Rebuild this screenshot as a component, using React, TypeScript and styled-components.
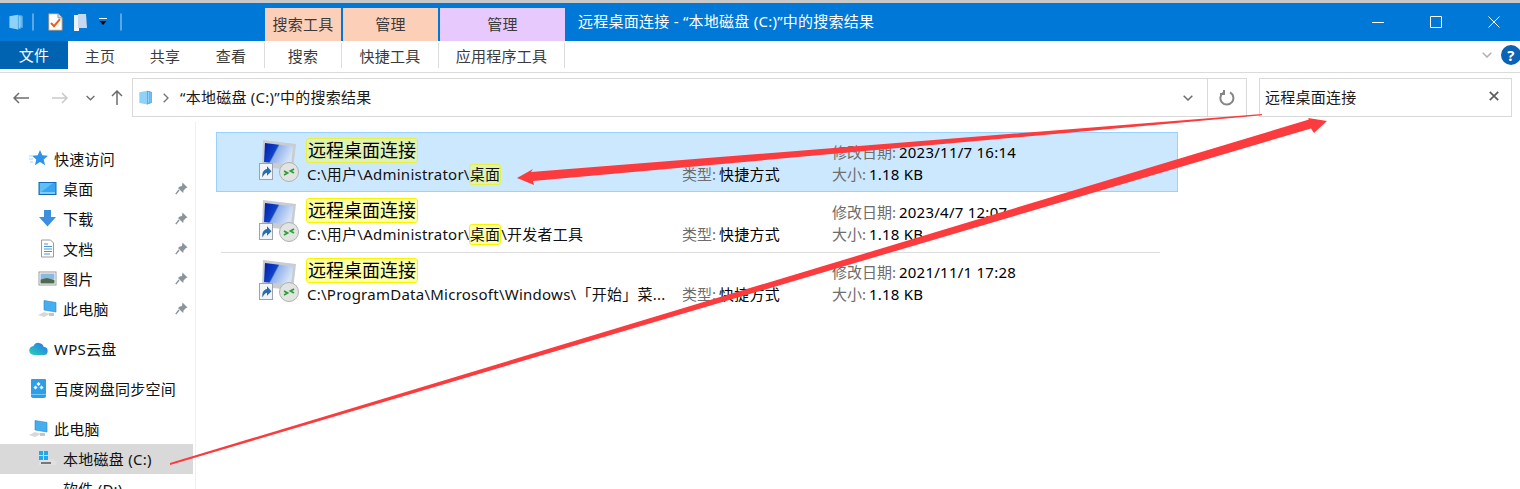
import styled, { createGlobalStyle } from "styled-components";
import type { ReactNode } from "react";

const GlobalStyle = createGlobalStyle`
  html, body {
    margin: 0;
    padding: 0;
    background: #fff;
  }
  * {
    box-sizing: border-box;
  }
`;

const Window = styled.div`
  position: relative;
  width: 1520px;
  height: 489px;
  overflow: hidden;
  background: #fff;
  color: #000;
  font-family: "Noto Sans", "Noto Sans CJK SC", sans-serif;
  font-size: 15px;
  letter-spacing: 0.25px;
`;

const TopStrip = styled.div`
  height: 3px;
  background: #c9c9c9;
`;

const TitleBar = styled.div`
  height: 38px;
  display: flex;
  background: #0078d7;
`;

const QuickAccess = styled.div`
  width: 265px;
  display: flex;
  align-items: center;
  padding: 0 0 0 8px;
`;

const QuickSep = styled.div<{ $left: number; $right: number }>`
  width: 2px;
  height: 18px;
  margin: 0 ${(p) => p.$right}px 0 ${(p) => p.$left}px;
  background: #0078d7;
  border: 1px solid #5ea6e3;
  border-radius: 1px;
`;

const QuickGap = styled.div<{ $width: number }>`
  width: ${(p) => p.$width}px;
`;

const ContextTabs = styled.div`
  display: flex;
  gap: 2px;
  padding-top: 5px;
`;

const ContextTab = styled.div<{ $width: number; $bg: string }>`
  width: ${(p) => p.$width}px;
  background: ${(p) => p.$bg};
  color: #3b3b3b;
  display: flex;
  align-items: center;
  justify-content: center;
  padding-bottom: 2px;
`;

const TitleText = styled.div`
  margin-left: 13px;
  color: #fff;
  line-height: 36px;
  white-space: nowrap;
`;

const WindowControls = styled.div`
  margin-left: auto;
  display: flex;
  align-items: center;
  gap: 46px;
  padding-right: 20px;
`;

const Ribbon = styled.div`
  height: 32px;
  display: flex;
  border-bottom: 1px solid #dadbdc;
  background: #fff;
`;

const FileTab = styled.div`
  width: 68px;
  height: 28px;
  background: #0063b1;
  color: #fff;
  display: flex;
  align-items: center;
  justify-content: center;
  padding-bottom: 2px;
`;

const RibbonTab = styled.div<{ $width: number; $sep?: boolean }>`
  width: ${(p) => p.$width}px;
  height: 25px;
  display: flex;
  align-items: center;
  justify-content: center;
  color: #3b3b3b;
  margin-top: 2px;
  border-right: ${(p) => (p.$sep ? "1px solid #dcdcdc" : "none")};
`;

const RibbonEnd = styled.div`
  margin-left: auto;
  display: flex;
  align-items: center;
  gap: 8px;
  padding: 0 0 3px 0;
`;

const HelpBadge = styled.div`
  width: 20px;
  height: 20px;
  border-radius: 50%;
  margin-right: -1px;
  background: #0a63b4;
  color: #fff;
  display: flex;
  align-items: center;
  justify-content: center;
  font-weight: 700;
  font-size: 15px;
`;

const NavBar = styled.div`
  height: 49px;
  display: flex;
  align-items: flex-start;
  padding-top: 5px;
`;

const NavButtons = styled.div`
  width: 132px;
  height: 39px;
  display: flex;
  align-items: center;
  padding-left: 13px;
`;

const NavSlot = styled.div<{ $width: number }>`
  width: ${(p) => p.$width}px;
  display: flex;
  align-items: center;
`;

const AddressBox = styled.div`
  width: 1115px;
  height: 39px;
  border: 1px solid #d9d9d9;
  display: flex;
  align-items: center;
  padding-left: 5px;
`;

const Crumb = styled.svg`
  margin-left: 10px;
`;

const AddressText = styled.div`
  margin-left: 11px;
  padding-bottom: 3px;
  color: #1a1a1a;
  white-space: nowrap;
`;

const AddressEnd = styled.div`
  margin-left: auto;
  display: flex;
  height: 100%;
  align-items: center;
`;

const AddressBtn = styled.div<{ $divider?: boolean }>`
  width: ${(p) => (p.$divider ? 39 : 38)}px;
  height: 100%;
  display: flex;
  align-items: center;
  justify-content: center;
  border-left: ${(p) => (p.$divider ? "1px solid #d9d9d9" : "none")};
`;

const SearchBox = styled.div`
  width: 253px;
  height: 39px;
  margin-left: 12px;
  border: 1px solid #d9d9d9;
  display: flex;
  align-items: center;
  justify-content: space-between;
  padding: 0 12px 3px 5px;
  color: #1a1a1a;
`;

const Body = styled.div`
  display: flex;
  height: 367px;
`;

const Sidebar = styled.div`
  width: 196px;
  flex-shrink: 0;
  padding-top: 22px;
  border-right: 1px solid #f0f0f0;
`;

const SideRow = styled.div<{ $level: number; $selected?: boolean; $gap?: number }>`
  height: 30px;
  width: 193px;
  display: flex;
  align-items: center;
  gap: 6px;
  padding-left: ${(p) => (p.$level === 1 ? 29 : 38)}px;
  padding-right: 3px;
  padding-bottom: 2px;
  margin-top: ${(p) => p.$gap ?? 0}px;
  background: ${(p) => (p.$selected ? "#d9d9d9" : "transparent")};
  color: #111;
  white-space: nowrap;
`;

const SideIcon = styled.div`
  width: 19px;
  height: 19px;
  flex-shrink: 0;
`;

const PinSlot = styled.div`
  margin-left: auto;
  margin-right: 2px;
  display: flex;
`;

const Results = styled.div`
  padding: 10px 0 0 20px;
`;

const ResultRow = styled.div<{ $selected?: boolean }>`
  width: 962px;
  height: 60px;
  display: grid;
  grid-template-columns: 91px 375px 150px 1fr;
  grid-template-rows: 22px 21px;
  padding-top: 10px;
  background: ${(p) => (p.$selected ? "#cce8ff" : "transparent")};
  outline: ${(p) => (p.$selected ? "1px solid #99d1ff" : "none")};
  outline-offset: -1px;
`;

const RowRule = styled.div`
  width: 939px;
  height: 1px;
  margin: 0 0 -1px 5px;
  background: #dcdcdc;
`;

const ThumbCell = styled.div`
  grid-row: 1 / span 2;
  padding: 0 0 0 39px;
  margin-top: -7px;
`;

const NameCell = styled.div`
  display: flex;
  align-items: flex-start;
  font-size: 18px;
  letter-spacing: 0;
  margin-top: -4px;
`;

const Mark = styled.span<{ $selected?: boolean; $small?: boolean }>`
  display: inline-block;
  background: ${(p) => (p.$selected ? "#dff2b4" : "#ffffa8")};
  border: 1px solid ${(p) => (p.$selected ? "#e8f040" : "#f6f600")};
  border-radius: 3px;
  padding: 0 ${(p) => (p.$small ? 0 : 1)}px;
  margin-left: -1px;
  line-height: ${(p) => (p.$small ? "19px" : "23px")};
`;

const PathCell = styled.div`
  grid-column: 2;
  grid-row: 2;
  color: #111;
  white-space: nowrap;
  line-height: 21px;
`;

const MetaCell = styled.div<{ $column: number; $row: number }>`
  grid-column: ${(p) => p.$column};
  grid-row: ${(p) => p.$row};
  white-space: nowrap;
  line-height: 21px;
`;

const MetaLabel = styled.span`
  color: #6d6d6d;
  letter-spacing: 0;
  margin-right: -1px;
`;

const ArrowLayer = styled.svg`
  position: absolute;
  left: 0;
  top: 0;
  pointer-events: none;
`;

const CubeIcon = ({ size = 16 }: { size?: number }) => (
  <svg width={size} height={size} viewBox="0 0 16 17">
    <path d="M1 2.500 10 .8l5 1.400v12.200l-5 2-9-1.800z" fill="#8fd2f8" />
    <path d="M10 .8l5 1.400v12.200l-5 2z" fill="#3fa2e8" />
    <path d="M11.500 2v13M13.200 2.500v11.500" stroke="#a5dcfa" />
  </svg>
);

const CheckDoc = () => (
  <svg width="15" height="18" viewBox="0 0 15 18">
    <path d="M.7.7h9.500l4 4v12.600H.7z" fill="#fff" stroke="#8a8a8a" />
    <path d="M10 .7v4.200h4.200" fill="#ddd" stroke="#9a9a9a" />
    <path d="M3 10l3 3.200 6-7" fill="none" stroke="#e8601c" strokeWidth="2" />
  </svg>
);

const PaleFolder = () => (
  <svg width="13" height="17" viewBox="0 0 13 17">
    <path d="M0 1h4l1 3v13H0z" fill="#e9f1fb" />
    <path d="M4 0h8l1 14H4z" fill="#c5d8f0" />
    <path d="M0 14h5v3H1z" fill="#f4f8fd" />
  </svg>
);

const DropMark = () => (
  <svg width="8" height="8" viewBox="0 0 8 8">
    <path d="M0 0h8v1H0z" fill="#fff" />
    <path d="M.5 3h7L4 7z" fill="#000" />
  </svg>
);

const MinIcon = () => (
  <svg width="12" height="12" viewBox="0 0 12 12">
    <path d="M0 6.500h12" stroke="#fff" />
  </svg>
);

const MaxIcon = () => (
  <svg width="12" height="12" viewBox="0 0 12 12">
    <path d="M.5.5h11v11H.5z" fill="none" stroke="#fff" />
  </svg>
);

const CloseIcon = () => (
  <svg width="12" height="12" viewBox="0 0 12 12">
    <path d="M.5.5l11 11M11.500.5l-11 11" stroke="#fff" />
  </svg>
);

const Chevron = ({ color = "#6d6d6d", w = 10 }: { color?: string; w?: number }) => (
  <svg width={w} height="6" viewBox="0 0 10 6">
    <path d="M.7.7 5 5l4.300-4.300" fill="none" stroke={color} strokeWidth="1.500" />
  </svg>
);

const NavArrow = ({ color, flip }: { color: string; flip?: boolean }) => (
  <svg width="16" height="12" viewBox="0 0 16 12" style={flip ? { transform: "scaleX(-1)" } : undefined}>
    <path d="M1 6h15M6 1 1 6l5 5" fill="none" stroke={color} strokeWidth="1.500" />
  </svg>
);

const UpArrow = () => (
  <svg width="12" height="15" viewBox="0 0 12 15">
    <path d="M6 15V1M1 6l5-5 5 5" fill="none" stroke="#6d6d6d" strokeWidth="1.500" />
  </svg>
);

const RefreshIcon = () => (
  <svg width="16" height="16" viewBox="0 0 16 16">
    <path d="M11 2.400a6.500 6.500 0 1 1-6.400.1" fill="none" stroke="#858585" strokeWidth="2" />
    <path d="M5 0v4H1" fill="none" stroke="#858585" strokeWidth="2" />
  </svg>
);

const ClearIcon = () => (
  <svg width="10" height="10" viewBox="0 0 10 10">
    <path d="M.8.8l8.400 8.400M9.200.8.8 9.200" stroke="#5c5c5c" strokeWidth="1.700" />
  </svg>
);

const PinIcon = () => (
  <svg width="13" height="13" viewBox="0 0 13 13">
    <path d="M7.500.5 12.500 5.500 11 6l-2.500 2.500-.2 2.500-2-1.800L5 8 3 6 4.800 4.500 7 4z" fill="#8b939b" />
    <path d="M4 8 .8 12.200" stroke="#8b939b" strokeWidth="1.400" />
  </svg>
);

const StarIcon = () => (
  <svg width="19" height="19" viewBox="0 0 19 19">
    <path d="M11 1l2.300 5.300 5.700.4-4.300 3.700 1.400 5.800L11 13.100l-5.100 3.100 1.400-5.800L3 6.700l5.700-.4z" fill="#2f93e8" />
    <path d="M0 7h3M0 10h4M1 13h3" stroke="#a8d2f4" />
  </svg>
);

const DesktopIcon = () => (
  <svg width="19" height="19" viewBox="0 0 19 19">
    <rect x="1" y="3.500" width="17" height="12" fill="#37a5f0" stroke="#0f6cb8" />
    <path d="M2 14 15 4H2z" fill="#5fc0f6" />
    <path d="M2 14h15" stroke="#d4ecfb" />
  </svg>
);

const DownloadIcon = () => (
  <svg width="19" height="19" viewBox="0 0 19 19">
    <path d="M6 1h7v7h5l-8.500 9.500L1 8h5z" fill="#3c8fe0" />
  </svg>
);

const DocIcon = () => (
  <svg width="19" height="19" viewBox="0 0 19 19">
    <path d="M3.500 1h9l3 3v14h-12z" fill="#fff" stroke="#9b9b9b" />
    <path d="M6 5h4M6 7.500h8M6 10h8M6 12.500h8M6 15h6" stroke="#4a92cc" />
  </svg>
);

const PictureIcon = () => (
  <svg width="19" height="19" viewBox="0 0 19 19">
    <rect x="1" y="3" width="17" height="13" fill="#fff" stroke="#9b9b9b" />
    <rect x="2.500" y="4.500" width="14" height="6" fill="#8cb9e0" />
    <path d="M2.500 10.500 9 9l7.500 2v3.500h-14z" fill="#4f6b4d" />
  </svg>
);

const PcIcon = () => (
  <svg width="20" height="19" viewBox="0 0 20 19">
    <path d="M6 1.500 18 3.500v9.500L6 11z" fill="#45aef0" stroke="#2b86c9" strokeWidth=".6" />
    <path d="M0 16 6 13l6 2-6 3z" fill="#d8d8d8" />
    <path d="M11 14h5v3h-5z" fill="#c5c5c5" />
  </svg>
);

const WpsCloud = () => (
  <svg width="19" height="19" viewBox="0 0 19 19">
    <defs>
      <linearGradient id="wpsGrad" x1="0" x2="1" y1="1" y2="0">
        <stop offset="0" stopColor="#27d3b4" />
        <stop offset="1" stopColor="#2a6ff0" />
      </linearGradient>
    </defs>
    <path d="M5 16a4.500 4.500 0 0 1-.5-9 5.500 5.500 0 0 1 10.300 1A4 4 0 0 1 14.500 16z" fill="url(#wpsGrad)" />
  </svg>
);

const BaiduIcon = () => (
  <svg width="19" height="19" viewBox="0 0 19 19">
    <path d="M3 0h13a1 1 0 0 1 1 1v16a2 2 0 0 1-2 2H4a2 2 0 0 1-2-2V1a1 1 0 0 1 1-1z" fill="#2b9fe8" />
    <path d="M9.500 3 11.500 5 9.500 7 7.500 5zM6.500 6.500 8.500 8.500 6.500 10.500 4.500 8.500zM12.500 6.500 14.500 8.500 12.500 10.500 10.500 8.500z" fill="#fff" />
    <path d="M2 15.500h15" stroke="#7cc7f4" />
  </svg>
);

const DriveIcon = ({ system }: { system?: boolean }) => (
  <svg width="19" height="19" viewBox="0 0 19 19">
    <path d="M1 12.500 4 10h11l3.500 2.500V16H1z" fill="#e0e0e0" />
    <path d="M3 14h10" stroke="#555" strokeWidth="1.500" />
    {system && <path d="M1 2h4v4H1zM6 2h4v4H6zM1 7h4v4H1zM6 7h4v4H6z" fill="#1fa8ee" />}
  </svg>
);

const RdpIcon = () => (
  <svg width="50" height="50" viewBox="0 0 50 50">
    <defs>
      <linearGradient id="rdpScreen" x1="0" x2="1" y1="0" y2="0.400">
        <stop offset="0" stopColor="#001ca8" />
        <stop offset="0.450" stopColor="#1244c8" />
        <stop offset="0.500" stopColor="#8fb0ea" />
        <stop offset="1" stopColor="#d5e3f8" />
      </linearGradient>
    </defs>
    <path d="M8 5 41 9l-3 26-31-3z" fill="#c9ccd0" />
    <path d="M10 8 38 11.500 36 30 9 27z" fill="url(#rdpScreen)" />
    <rect x="4.500" y="28.500" width="13" height="16" fill="#f2f5f8" stroke="#9da3a8" />
    <path d="M7.500 42.500c-.8-4.500 1-8 4.500-8.500v-2.800l4.500 5-4.500 4.500v-3c-2 .3-3.300 2.200-4.500 4.800z" fill="#2d6cab" />
    <circle cx="34" cy="37" r="9.500" fill="#e2e4e2" stroke="#aeb2ae" />
    <path d="M29 36l3.500 2-3.500 2M39 34l-3.500 2 3.500 2" fill="none" stroke="#2f9f3a" strokeWidth="1.800" />
  </svg>
);

const sideRows: { label: string; icon: ReactNode; level: number; pin?: boolean; gap?: number; selected?: boolean }[] = [
  { label: "快速访问", icon: <StarIcon />, level: 1 },
  { label: "桌面", icon: <DesktopIcon />, level: 2, pin: true },
  { label: "下载", icon: <DownloadIcon />, level: 2, pin: true },
  { label: "文档", icon: <DocIcon />, level: 2, pin: true },
  { label: "图片", icon: <PictureIcon />, level: 2, pin: true },
  { label: "此电脑", icon: <PcIcon />, level: 2, pin: true },
  { label: "WPS云盘", icon: <WpsCloud />, level: 1, gap: 10 },
  { label: "百度网盘同步空间", icon: <BaiduIcon />, level: 1, gap: 10 },
  { label: "此电脑", icon: <PcIcon />, level: 1, gap: 10 },
  { label: "本地磁盘 (C:)", icon: <DriveIcon system />, level: 2, selected: true },
  { label: "软件 (D:)", icon: <DriveIcon />, level: 2 },
];

const results = [
  {
    path: (s: boolean) => (
      <>
        C:\用户\Administrator\<Mark $small $selected={s}>桌面</Mark>
      </>
    ),
    date: "2023/11/7 16:14",
    selected: true,
  },
  {
    path: (s: boolean) => (
      <>
        C:\用户\Administrator\<Mark $small $selected={s}>桌面</Mark>\开发者工具
      </>
    ),
    date: "2023/4/7 12:07",
    selected: false,
  },
  {
    path: () => <>C:\ProgramData\Microsoft\Windows\「开始」菜...</>,
    date: "2021/11/1 17:28",
    selected: false,
  },
];

const App = () => {
  return (
    <Window>
      <GlobalStyle />
      <TopStrip />
      <TitleBar>
        <QuickAccess>
          <CubeIcon />
          <QuickSep $left={8} $right={14} />
          <CheckDoc />
          <QuickGap $width={11} />
          <PaleFolder />
          <QuickGap $width={12} />
          <DropMark />
          <QuickSep $left={13} $right={0} />
        </QuickAccess>
        <ContextTabs>
          <ContextTab $width={76} $bg="#fccfb9">搜索工具</ContextTab>
          <ContextTab $width={95} $bg="#fccfb9">管理</ContextTab>
          <ContextTab $width={125} $bg="#e8c9fd">管理</ContextTab>
        </ContextTabs>
        <TitleText>远程桌面连接 - “本地磁盘 (C:)”中的搜索结果</TitleText>
        <WindowControls>
          <MinIcon />
          <MaxIcon />
          <CloseIcon />
        </WindowControls>
      </TitleBar>
      <Ribbon>
        <FileTab>文件</FileTab>
        <RibbonTab $width={64}>主页</RibbonTab>
        <RibbonTab $width={66}>共享</RibbonTab>
        <RibbonTab $width={67} $sep>查看</RibbonTab>
        <RibbonTab $width={77} $sep>搜索</RibbonTab>
        <RibbonTab $width={97} $sep>快捷工具</RibbonTab>
        <RibbonTab $width={126} $sep>应用程序工具</RibbonTab>
        <RibbonEnd>
          <Chevron color="#b0b0b0" w={12} />
          <HelpBadge>?</HelpBadge>
        </RibbonEnd>
      </Ribbon>
      <NavBar>
        <NavButtons>
          <NavSlot $width={39}><NavArrow color="#6d6d6d" /></NavSlot>
          <NavSlot $width={34}><NavArrow color="#c9c9c9" flip /></NavSlot>
          <NavSlot $width={25}><Chevron w={9} /></NavSlot>
          <NavSlot $width={12}><UpArrow /></NavSlot>
        </NavButtons>
        <AddressBox>
          <CubeIcon size={15} />
          <Crumb width="6" height="10" viewBox="0 0 6 10">
            <path d="M.7.7 5 5 .7 9.300" fill="none" stroke="#707070" strokeWidth="1.300" />
          </Crumb>
          <AddressText>“本地磁盘 (C:)”中的搜索结果</AddressText>
          <AddressEnd>
            <AddressBtn><Chevron /></AddressBtn>
            <AddressBtn $divider><RefreshIcon /></AddressBtn>
          </AddressEnd>
        </AddressBox>
        <SearchBox>
          远程桌面连接
          <ClearIcon />
        </SearchBox>
      </NavBar>
      <Body>
        <Sidebar>
          {sideRows.map((row, i) => (
            <SideRow key={i} $level={row.level} $gap={row.gap} $selected={row.selected}>
              <SideIcon>{row.icon}</SideIcon>
              {row.label}
              {row.pin && (
                <PinSlot>
                  <PinIcon />
                </PinSlot>
              )}
            </SideRow>
          ))}
        </Sidebar>
        <Results>
          {results.map((r, i) => (
            <div key={i}>
              <ResultRow $selected={r.selected}>
                <ThumbCell>
                  <RdpIcon />
                </ThumbCell>
                <NameCell>
                  <Mark $selected={r.selected}>远程桌面连接</Mark>
                </NameCell>
                <PathCell>{r.path(r.selected)}</PathCell>
                <MetaCell $column={3} $row={2}>
                  <MetaLabel>类型: </MetaLabel>快捷方式
                </MetaCell>
                <MetaCell $column={4} $row={1}>
                  <MetaLabel>修改日期: </MetaLabel>{r.date}
                </MetaCell>
                <MetaCell $column={4} $row={2}>
                  <MetaLabel>大小: </MetaLabel>1.18 KB
                </MetaCell>
              </ResultRow>
              {i === 1 && <RowRule />}
            </div>
          ))}
        </Results>
      </Body>
      <ArrowLayer width="1520" height="489" viewBox="0 0 1520 489">
        <polygon points="1262,114 531,172 533,169 517,178 534,185 533,181 1262,115.200" fill="#fb3b3d" />
        <polygon points="170,463 1309,119.500 1308,118 1327,121 1314,133 1311,128.500 170,465" fill="#fb3b3d" />
      </ArrowLayer>
    </Window>
  );
};

export default App;
